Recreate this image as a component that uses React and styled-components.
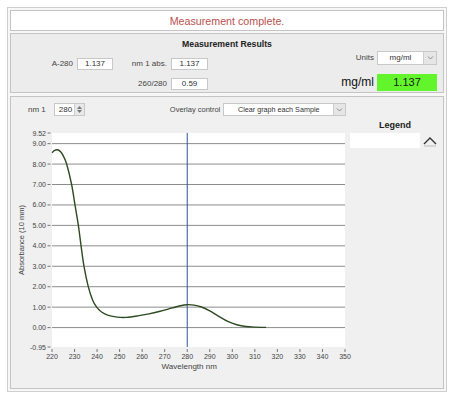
import styled, { createGlobalStyle } from "styled-components";

const GlobalStyle = createGlobalStyle`
  body {
    margin: 0;
    background: #ffffff;
    font-family: "Liberation Sans", Arial, sans-serif;
    color: #333;
  }
`;

// spectrum points (nm, absorbance)
const spectrum = [
  [220, 8.55], [221, 8.66], [222.5, 8.7], [224, 8.58], [225, 8.4],
  [226.5, 8.0], [228.7, 7.0], [230.2, 6.0], [231.7, 5.0], [232.9, 4.0],
  [234.2, 3.0], [236.1, 2.0], [238, 1.35], [239.8, 1.0], [242, 0.76],
  [245, 0.6], [249, 0.51], [253, 0.5], [258, 0.57], [263, 0.67],
  [268, 0.8], [273, 0.95], [277, 1.07], [280, 1.12], [283, 1.1],
  [286, 1.02], [290, 0.82], [294, 0.55], [298, 0.3], [302, 0.14],
  [306, 0.05], [310, 0.02], [315, 0.01],
];

const PLOT = { left: 41, right: 334, top: 13, bottom: 227 };
const xOf = (nm) => PLOT.left + ((nm - 220) * (PLOT.right - PLOT.left)) / 130;
const yOf = (v) => PLOT.bottom - ((v + 0.95) * (PLOT.bottom - PLOT.top)) / 10.47;

function smoothPath(raw) {
  const pts = raw.map(([nm, v]) => [xOf(nm), yOf(v)]);
  let d = `M${pts[0][0].toFixed(2)},${pts[0][1].toFixed(2)}`;
  for (let i = 0; i < pts.length - 1; i++) {
    const p0 = pts[i - 1] || pts[i];
    const p1 = pts[i];
    const p2 = pts[i + 1];
    const p3 = pts[i + 2] || p2;
    const c1 = [p1[0] + (p2[0] - p0[0]) / 6, p1[1] + (p2[1] - p0[1]) / 6];
    const c2 = [p2[0] - (p3[0] - p1[0]) / 6, p2[1] - (p3[1] - p1[1]) / 6];
    d += ` C${c1[0].toFixed(2)},${c1[1].toFixed(2)} ${c2[0].toFixed(2)},${c2[1].toFixed(2)} ${p2[0].toFixed(2)},${p2[1].toFixed(2)}`;
  }
  return d;
}

const Frame = styled.div`
  margin: 7px 0 0 7px;
  width: 440px;
  height: 385px;
  box-sizing: border-box;
  border: 1px solid #cfcfcf;
  background: #f7f7f7;
  padding: 2px;
  display: flex;
  flex-direction: column;
  gap: 2px;
`;

const Status = styled.div`
  height: 21px;
  box-sizing: border-box;
  background: #fff;
  border: 1px solid #c4c4c4;
  color: #b9514e;
  font-size: 10.7px;
  display: flex;
  align-items: center;
  justify-content: center;
`;

const Panel = styled.section`
  box-sizing: border-box;
  border: 1px solid #c4c4c4;
  background: ${(p) => p.$bg || "#ececec"};
`;

const Results = styled(Panel)`
  height: 60px;
  display: grid;
  grid-template-columns: 1fr auto;
  grid-template-rows: auto auto;
`;

const ResultsTitle = styled.h3`
  grid-column: 1 / -1;
  margin: 0;
  padding-top: 5px;
  height: 11px;
  line-height: 11px;
  font-size: 8.7px;
  font-weight: bold;
  text-align: center;
  color: #222;
`;

const Fields = styled.div`
  margin-top: 5px;
  display: grid;
  grid-template-columns: 62px 36px 50px 37px;
  grid-auto-rows: 12px;
  column-gap: 4px;
  row-gap: 8px;
  align-items: center;
`;

const Label = styled.span`
  font-size: ${(p) => p.$size || "8px"};
  color: ${(p) => p.$color || "#444"};
  text-align: right;
  white-space: nowrap;
`;

const Readout = styled.div`
  height: 12px;
  box-sizing: border-box;
  background: #fff;
  border: 1px solid #c8c8c8;
  font-size: 8px;
  color: #333;
  display: flex;
  align-items: center;
  justify-content: center;
`;

const UnitsBlock = styled.div`
  margin-top: -3px;
  padding-right: 6px;
  display: grid;
  grid-template-columns: auto 60px;
  column-gap: 3px;
  row-gap: 7px;
  align-items: center;
`;

const Select = styled.div`
  width: ${(p) => p.$w}px;
  height: ${(p) => p.$h || 13}px;
  box-sizing: border-box;
  background: #fff;
  border: 1px solid #c8c8c8;
  display: flex;
  align-items: stretch;
`;

const SelectText = styled.span`
  flex: 1;
  font-size: ${(p) => p.$size || "8px"};
  color: #333;
  display: flex;
  align-items: center;
  justify-content: center;
`;

const ArrowBtn = styled.span`
  width: ${(p) => p.$w || 11}px;
  background: #e6e6e6;
  border-left: 1px solid #cfcfcf;
  display: flex;
  align-items: center;
  justify-content: center;
`;

const GreenValue = styled.div`
  height: 17px;
  background: #62f52c;
  font-size: 11px;
  color: #1a1a1a;
  display: flex;
  align-items: center;
  justify-content: center;
`;

const Graph = styled(Panel)`
  margin-top: 1px;
  flex: 1;
  display: flex;
  flex-direction: column;
`;

const Controls = styled.div`
  padding: 6px 0 0 17px;
  height: 13px;
  display: flex;
  align-items: center;
`;

const Spinner = styled.div`
  margin-left: 8px;
  width: 31px;
  height: 13px;
  box-sizing: border-box;
  background: #fff;
  border: 1px solid #c8c8c8;
  display: flex;
  align-items: stretch;
  font-size: 8px;
`;

const SpinValue = styled.span`
  flex: 1;
  display: flex;
  align-items: center;
  padding-left: 4px;
`;

const SpinBtn = styled.span`
  width: 9px;
  background: #e8e8e8;
  border-left: 1px solid #d0d0d0;
  display: flex;
  flex-direction: column;
  align-items: center;
  justify-content: center;
  gap: 1px;
`;

const OverlayLabel = styled(Label)`
  margin-left: 85px;
  margin-right: 3px;
  font-size: 7.5px;
`;

const GraphBody = styled.div`
  margin-top: 4px;
  display: flex;
`;

const ChartSvg = styled.svg`
  flex: none;
  overflow: visible;
`;

const LegendCol = styled.div`
  margin-left: 2px;
  width: 90px;
  display: flex;
  flex-direction: column;
`;

const LegendTitle = styled.div`
  font-size: 9px;
  font-weight: bold;
  color: #222;
  text-align: center;
  height: 10px;
  line-height: 10px;
`;

const LegendRow = styled.div`
  margin-top: 3px;
  display: flex;
  height: 15px;
`;

const LegendBox = styled.div`
  width: 70px;
  background: #fff;
`;

const LegendBtn = styled.div`
  width: 20px;
  display: flex;
  align-items: center;
  justify-content: center;
`;

const Chevron = ({ up }) => (
  <svg width="7" height="5" viewBox="0 0 7 5">
    <polyline
      points={up ? "1,4 3.5,1.5 6,4" : "1,1.5 3.5,4 6,1.5"}
      fill="none"
      stroke="#8a8a8a"
      strokeWidth="1"
    />
  </svg>
);

const Tri = ({ up }) => (
  <svg width="5" height="3" viewBox="0 0 5 3">
    <polygon points={up ? "0,3 2.5,0 5,3" : "0,0 2.5,3 5,0"} fill="#777" />
  </svg>
);

function Chart() {
  const yTicks = [9, 8, 7, 6, 5, 4, 3, 2, 1, 0];
  const xTicks = [];
  for (let nm = 220; nm <= 350; nm += 10) xTicks.push(nm);
  const plotW = PLOT.right - PLOT.left;
  const plotH = PLOT.bottom - PLOT.top;
  const axisFont = { fontFamily: "Liberation Sans, Arial, sans-serif", fontSize: 7, fill: "#444" };

  return (
    <ChartSvg width="337" height="252" viewBox="0 0 337 252">
      <rect x={PLOT.left} y={PLOT.top} width={plotW} height={plotH} fill="#fff" />
      {yTicks.map((v) => (
        <line key={v} x1={PLOT.left} x2={PLOT.right} y1={yOf(v)} y2={yOf(v)} stroke="#8c8c8c" strokeWidth="1" />
      ))}
      {[9.52, ...yTicks, -0.95].map((v) => (
        <g key={"yl" + v}>
          <text x={35} y={yOf(v) + 2.5} textAnchor="end" {...axisFont}>
            {v.toFixed(2)}
          </text>
          <line x1={36.5} x2={39.5} y1={yOf(v)} y2={yOf(v)} stroke="#555" strokeWidth="0.8" />
        </g>
      ))}
      {xTicks.map((nm) => (
        <g key={"xl" + nm}>
          <line x1={xOf(nm)} x2={xOf(nm)} y1={PLOT.bottom + 2} y2={PLOT.bottom + 5} stroke="#555" strokeWidth="0.8" />
          <text x={xOf(nm)} y={PLOT.bottom + 12} textAnchor="middle" {...axisFont}>
            {nm}
          </text>
        </g>
      ))}
      <line x1={xOf(280)} x2={xOf(280)} y1={PLOT.top} y2={PLOT.bottom} stroke="#2f5597" strokeWidth="1" />
      <path d={smoothPath(spectrum)} fill="none" stroke="#2e4a22" strokeWidth="1.4" />
      <text x={xOf(280) + 2} y={PLOT.bottom + 22} textAnchor="middle" {...axisFont} fontSize="8">
        Wavelength nm
      </text>
      <text
        transform={`translate(13 ${(PLOT.top + PLOT.bottom) / 2}) rotate(-90)`}
        textAnchor="middle"
        {...axisFont}
        fontSize="7.5"
      >
        Absorbance (10 mm)
      </text>
    </ChartSvg>
  );
}

export default function App() {
  return (
    <>
      <GlobalStyle />
      <Frame>
        <Status>Measurement complete.</Status>

        <Results>
          <ResultsTitle>Measurement Results</ResultsTitle>
          <Fields>
            <Label>A-280</Label>
            <Readout>1.137</Readout>
            <Label>nm 1 abs.</Label>
            <Readout>1.137</Readout>
            <span />
            <span />
            <Label>260/280</Label>
            <Readout>0.59</Readout>
          </Fields>
          <UnitsBlock>
            <Label>Units</Label>
            <Select $w={60} $h={14}>
              <SelectText>mg/ml</SelectText>
              <ArrowBtn $w={12}>
                <Chevron />
              </ArrowBtn>
            </Select>
            <Label $size="12px" $color="#111">mg/ml</Label>
            <GreenValue>1.137</GreenValue>
          </UnitsBlock>
        </Results>

        <Graph $bg="#f0f0f0">
          <Controls>
            <Label>nm 1</Label>
            <Spinner>
              <SpinValue>280</SpinValue>
              <SpinBtn>
                <Tri up />
                <Tri />
              </SpinBtn>
            </Spinner>
            <OverlayLabel>Overlay control</OverlayLabel>
            <Select $w={123}>
              <SelectText $size="7.2px">Clear graph each Sample</SelectText>
              <ArrowBtn>
                <Chevron />
              </ArrowBtn>
            </Select>
          </Controls>
          <GraphBody>
            <Chart />
            <LegendCol>
              <LegendTitle>Legend</LegendTitle>
              <LegendRow>
                <LegendBox />
                <LegendBtn>
                  <svg width="16" height="12" viewBox="0 0 16 12">
                    <polyline points="2,9 8,3 14,9" fill="none" stroke="#333" strokeWidth="1.4" />
                    <line x1="2" x2="14" y1="11" y2="11" stroke="#bbb" strokeWidth="1" />
                  </svg>
                </LegendBtn>
              </LegendRow>
            </LegendCol>
          </GraphBody>
        </Graph>
      </Frame>
    </>
  );
}
